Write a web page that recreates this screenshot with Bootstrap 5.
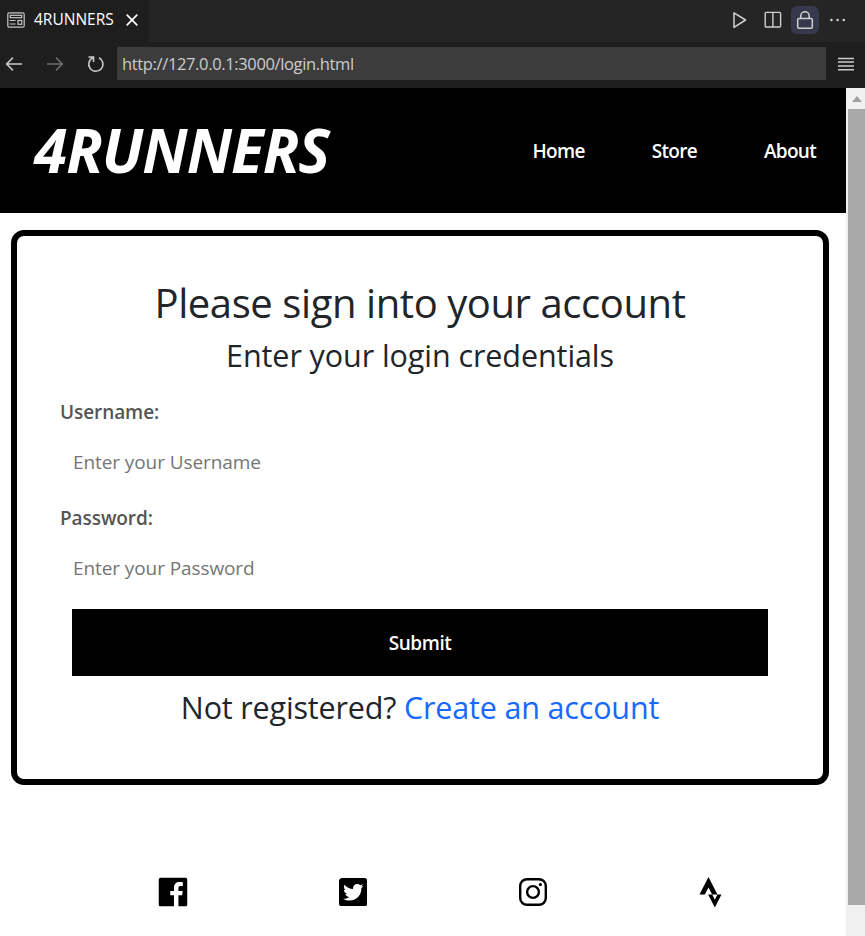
<!DOCTYPE html>
<html lang="en">
<head>
<meta charset="utf-8">
<meta name="viewport" content="width=device-width, initial-scale=1">
<title>4RUNNERS</title>
<link href="https://cdn.jsdelivr.net/npm/bootstrap@5.3.0/dist/css/bootstrap.min.css" rel="stylesheet">
<style>
body{font-family:"Trebuchet MS","Open Sans",sans-serif;background:#fff}
svg{display:block;flex:none}
.app{height:936px}
.ui{font-family:"Segoe UI","Open Sans",sans-serif;color:#fff}
.tabs{height:42px;background:#252526}
.tab-item{width:149px;background:#1e1e1e;padding:0 0 2px 7px;font-size:15.5px;letter-spacing:0}
.tab-item span{width:80px;margin:0 12px 0 9px;white-space:nowrap}
.actions{padding:0 19px 2px 0}
.lock{width:28px;height:28px;border-radius:6px;background:#36384c;margin:0 11px 0 9px}
.tools{height:46px;background:#1e1e1e;padding-left:5px}
.nav-icon{margin-left:23px}
.address{width:709px;height:33px;background:#3c3c3c;color:#ccc;font-size:16.5px;padding:1px 0 0 5px;margin:0 12px 3px 12px;letter-spacing:-.36px}
.tools svg{margin-bottom:2px}
.site-head{height:125px;background:#000;padding:0 30px 0 34px}
.brand{font-size:60px;font-weight:700;font-style:italic;line-height:1;letter-spacing:-.9px;padding-bottom:2px}
.site-nav{gap:67px;font-size:19px;font-weight:600;letter-spacing:-.7px;padding-top:2px}
.login{margin:17px 17px 0 11px;height:555px;border:6px solid #000;border-radius:13px;padding:43px 43px 0}
.login h1{font-size:40px;line-height:48px;font-weight:400;margin:0 0 9px;white-space:nowrap;letter-spacing:-.42px}
.login h2{font-size:30.5px;line-height:38px;font-weight:400;margin:0;white-space:nowrap;letter-spacing:-.08px}
.login .register{letter-spacing:-.17px}
.login label{font-size:19px;line-height:29px;font-weight:600;color:#555;display:block;letter-spacing:-.08px}
.login input{display:block;width:100%;border:0;padding:0 13px;height:48px;margin-top:11px;font-size:19px;background:none;outline:0;letter-spacing:-.09px}
.login input::placeholder{color:#757575;opacity:1}
.field-next{margin-top:18px}
.send{display:block;width:696px;height:67px;border:0;background:#000;color:#fff;font-size:19px;font-weight:600;letter-spacing:-.45px;margin:17px auto 0;padding:2px 0 0}
.login a{color:#1769ff;text-decoration:none}
.social{margin-top:88px;padding-left:83px}
.social a{width:180px;height:38px;color:#000}
.social a:last-child{padding-right:5px}
.scroller{width:19px;background:#f0f0f0;padding-left:2px}
.scroller .arrow{height:21px}
.thumb{height:796px;background:#a8a8a8}
</style>
<script src="https://cdn.jsdelivr.net/npm/bootstrap@5.3.0/dist/js/bootstrap.bundle.min.js"></script>
</head>
<body>
<div class="app d-flex flex-column overflow-hidden">
  <div class="ui tabs d-flex justify-content-between">
    <div class="tab-item d-flex align-items-center">
      <svg width="18" height="16" viewBox="0 0 18 16" fill="none" stroke="#c5c5c5" stroke-width="1.2"><rect x=".8" y=".8" width="16.4" height="14.4" rx="1.5"/><rect x="3.3" y="3.3" width="11.4" height="2.4"/><path d="M2.6 8.5h6M2.6 12h6"/><rect x="11" y="8.5" width="3.7" height="3.8"/></svg>
      <span>4RUNNERS</span>
      <svg width="12" height="12" viewBox="0 0 12 12" stroke="#fff" stroke-width="1.7"><path d="M.7.7l10.6 10.6M11.3.7L.7 11.3"/></svg>
    </div>
    <div class="actions d-flex align-items-center">
      <svg width="15" height="18" viewBox="0 0 15 18" fill="none" stroke="#d0d0d0" stroke-width="1.5" stroke-linejoin="round"><path d="M1 1.8v14.6L12.6 9z"/></svg>
      <svg class="ms-3" width="18" height="18" viewBox="0 0 18 18" fill="none" stroke="#d0d0d0" stroke-width="1.4"><rect x="1.2" y="1.4" width="15.4" height="14.6" rx="1"/><path d="M8.9 1.4V16"/></svg>
      <div class="lock d-flex align-items-center justify-content-center"><svg width="18" height="20" viewBox="0 0 18 20" fill="none" stroke="#d0d0d0" stroke-width="1.5"><rect x="1.7" y="8.6" width="14.6" height="9.6" rx="1.2"/><path d="M4.8 8.6V6a4.2 4.2 0 0 1 8.4 0v2.6"/></svg></div>
      <svg width="16" height="4" viewBox="0 0 16 4" fill="#d0d0d0"><circle cx="1.4" cy="2" r="1.3"/><circle cx="7.6" cy="2" r="1.3"/><circle cx="13.8" cy="2" r="1.3"/></svg>
    </div>
  </div>
  <div class="ui tools d-flex align-items-center">
    <svg width="18" height="16" viewBox="0 0 18 16" fill="none" stroke="#ccc" stroke-width="1.5"><path d="M17 8H1.8M8 1.6L1.6 8 8 14.4"/></svg>
    <svg class="nav-icon" width="18" height="16" viewBox="0 0 18 16" fill="none" stroke="#6e6e6e" stroke-width="1.5"><path d="M1 8h15.2M10 1.6L16.4 8 10 14.4"/></svg>
    <svg class="nav-icon" width="18" height="18" viewBox="0 0 18 18" fill="none" stroke="#ccc" stroke-width="1.6"><path d="M1.5 2h5v5M6.2 2.6A7.1 7.1 0 1 0 12 2.8"/></svg>
    <div class="address d-flex align-items-center">http://127.0.0.1:3000/login.html</div>
    <svg width="16" height="14" viewBox="0 0 16 14" stroke="#ccc" stroke-width="1.5"><path d="M0 1.4h16M0 5h16M0 9h16M0 12.8h16"/></svg>
  </div>
  <div class="d-flex flex-grow-1">
    <main class="flex-grow-1">
      <header class="site-head d-flex align-items-center justify-content-between text-white">
        <div class="brand">4RUNNERS</div>
        <nav class="site-nav d-flex"><a class="text-white text-decoration-none">Home</a><a class="text-white text-decoration-none">Store</a><a class="text-white text-decoration-none">About</a></nav>
      </header>
      <form class="login">
        <div class="text-center">
          <h1>Please sign into your account</h1>
          <h2>Enter your login credentials</h2>
        </div>
        <div class="mt-4">
          <label for="user">Username:</label>
          <input id="user" type="text" placeholder="Enter your Username">
        </div>
        <div class="field-next">
          <label for="pass">Password:</label>
          <input id="pass" type="password" placeholder="Enter your Password">
        </div>
        <button class="send" type="button">Submit</button>
        <h2 class="text-center mt-2 pt-1 register">Not registered? <a href="#">Create an account</a></h2>
      </form>
      <footer class="social d-flex">
        <a class="d-flex justify-content-center"><svg width="38" height="38" viewBox="0 0 24 24" fill="currentColor"><path d="M20 3H4a1 1 0 0 0-1 1v16a1 1 0 0 0 1 1h8.615v-6.96h-2.338v-2.725h2.338v-2c0-2.325 1.42-3.592 3.5-3.592.699-.002 1.399.034 2.095.107v2.42h-1.435c-1.128 0-1.348.538-1.348 1.325v1.735h2.697l-.35 2.725h-2.348V21H20a1 1 0 0 0 1-1V4a1 1 0 0 0-1-1z"/></svg></a>
        <a class="d-flex justify-content-center align-items-center"><svg width="28.5" height="28.5" viewBox="0 32 448 448" fill="currentColor"><path d="M400 32H48C21.5 32 0 53.5 0 80v352c0 26.5 21.5 48 48 48h352c26.5 0 48-21.5 48-48V80c0-26.5-21.5-48-48-48zm-48.9 158.8c.2 2.8.2 5.7.2 8.5 0 86.7-66 186.6-186.6 186.6-37.2 0-71.7-10.8-100.7-29.4 5.3.6 10.4.8 15.8.8 30.7 0 58.9-10.4 81.4-28-28.8-.6-53-19.5-61.3-45.5 10.1 1.5 19.2 1.5 29.6-1.2-30-6.1-52.5-32.5-52.5-64.4v-.8c8.7 4.9 18.9 7.9 29.6 8.3a65.447 65.447 0 0 1-29.2-54.6c0-12.2 3.2-23.4 8.9-33.1 32.3 39.8 80.8 65.8 135.2 68.6-9.3-44.5 24-80.6 64-80.6 18.9 0 35.9 7.9 47.9 20.7 14.8-2.8 29-8.3 41.6-15.8-4.9 15.2-15.2 28-28.8 36.1 13.2-1.4 26-5.1 37.8-10.2-8.9 13.1-20.1 24.7-32.9 34z"/></svg></a>
        <a class="d-flex justify-content-center align-items-center"><svg width="28" height="28" viewBox="0 0 28 28" fill="none" stroke="currentColor" stroke-width="2.4"><rect x="1.2" y="1.2" width="25.6" height="25.6" rx="6.8"/><circle cx="14" cy="14" r="5.9"/><circle cx="21.4" cy="6.6" r="1.6" fill="currentColor" stroke="none"/></svg></a>
        <a class="d-flex justify-content-center align-items-center"><svg width="23" height="30.5" viewBox="0 0 384 512" fill="currentColor"><path d="M158.4 0L7 292h89.2l62.2-116.1L220.1 292h88.5zm150.2 292l-43.9 88.2-44.6-88.2h-67.6l112.2 220 111.5-220z"/></svg></a>
      </footer>
    </main>
    <aside class="scroller">
      <div class="arrow d-flex justify-content-center align-items-center"><svg width="10" height="6" viewBox="0 0 10 6" fill="#a0a0a0"><path d="M0 6l5-6 5 6z"/></svg></div>
      <div class="thumb"></div>
    </aside>
  </div>
</div>
</body>
</html>
